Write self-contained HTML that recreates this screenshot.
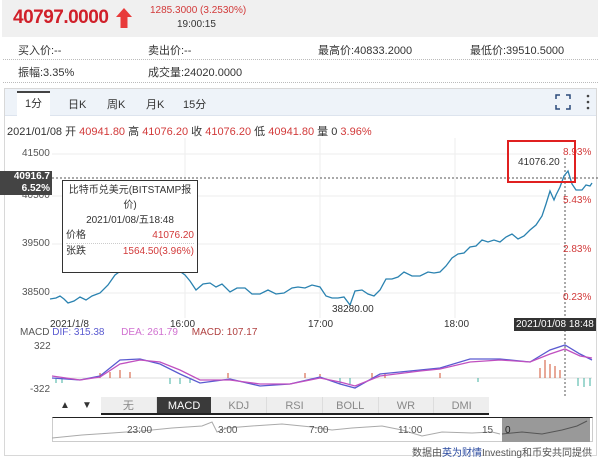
<!DOCTYPE html>
<html><head><meta charset="utf-8"><style>
*{margin:0;padding:0;box-sizing:border-box}
body{width:600px;height:460px;background:#fff;font-family:"Liberation Sans","Noto Sans CJK SC",sans-serif;font-size:11px;color:#333;position:relative;overflow:hidden}
.a{position:absolute;white-space:nowrap}
.r{color:#d23a3a}
</style></head><body>
<div class="a" style="left:2px;top:0;width:596px;height:37px;background:#f0f0f0"></div>
<div class="a" style="left:13px;top:7px;font-size:19px;letter-spacing:-0.5px;font-weight:bold;color:#d0202a">40797.0000</div>
<svg class="a" style="left:115px;top:7px" width="18" height="22"><path d="M9 1 L17 10 L12.5 10 L12.5 21 L5.5 21 L5.5 10 L1 10 Z" fill="#e83a3a"/></svg>
<div class="a r" style="left:150px;top:5px;font-size:10px">1285.3000 (3.2530%)</div>
<div class="a" style="left:177px;top:19px;font-size:10px">19:00:15</div>
<div class="a" style="left:18px;top:42px">买入价:--</div>
<div class="a" style="left:148px;top:42px">卖出价:--</div>
<div class="a" style="left:318px;top:42px">最高价:40833.2000</div>
<div class="a" style="left:470px;top:42px">最低价:39510.5000</div>
<div class="a" style="left:3px;top:59px;width:595px;border-top:1px dotted #bbb"></div>
<div class="a" style="left:18px;top:64px">振幅:3.35%</div>
<div class="a" style="left:148px;top:64px">成交量:24020.0000</div>
<div class="a" style="left:3px;top:82px;width:595px;border-top:1px dotted #bbb"></div>
<div class="a" style="left:4px;top:88px;width:593px;height:368px;border:1px solid #d8d8d8"></div>
<div class="a" style="left:5px;top:89px;width:591px;height:27px;background:#eef3f9;border-bottom:1px solid #dde4ee"></div>
<div class="a" style="left:17px;top:91px;width:33px;height:25px;background:#fff;border-top:2px solid #444;text-align:center;line-height:23px">1分</div>
<div class="a" style="left:68px;top:96px">日K</div>
<div class="a" style="left:107px;top:96px">周K</div>
<div class="a" style="left:146px;top:96px">月K</div>
<div class="a" style="left:183px;top:96px">15分</div>
<svg class="a" style="left:555px;top:94px" width="40" height="16"><path d="M1 5V1h4M11 1h4v4M15 11v4h-4M5 15H1v-4" stroke="#2a4a7a" stroke-width="1.5" fill="none"/><circle cx="33" cy="2" r="1.3" fill="#444"/><circle cx="33" cy="8" r="1.3" fill="#444"/><circle cx="33" cy="14" r="1.3" fill="#444"/></svg>
<div class="a" style="left:7px;top:123px">2021/01/08 开 <span class="r">40941.80</span> 高 <span class="r">41076.20</span> 收 <span class="r">41076.20</span> 低 <span class="r">40941.80</span> 量 0 <span class="r">3.96%</span></div>
<svg class="a" style="left:0;top:138px" width="600" height="260">
<g stroke="#eee"><line x1="185" y1="0" x2="185" y2="180"/><line x1="320" y1="0" x2="320" y2="180"/><line x1="455" y1="0" x2="455" y2="180"/><line x1="52" y1="16" x2="560" y2="16"/><line x1="52" y1="58" x2="560" y2="58"/><line x1="52" y1="106" x2="560" y2="106"/><line x1="52" y1="155" x2="560" y2="155"/></g>
<line x1="52" y1="40" x2="598" y2="40" stroke="#555" stroke-dasharray="2,2"/>
<line x1="565" y1="20" x2="565" y2="260" stroke="#555" stroke-dasharray="2,2"/>
<polyline fill="none" stroke="#2a82b0" stroke-width="1.3" points="50,161 56,160 60,158 64,161 68,165 74,163 80,159 86,162 92,158 100,155 108,147 115,137 122,132 128,133 134,132 142,133 150,132 157,125 164,128 170,131 178,132 185,137 190,143 196,152 203,146 210,145 216,149 222,146 230,154 237,150 245,150 252,156 260,156 268,152 276,156 284,155 292,150 298,149 305,150 312,147 320,149 326,158 332,160 338,160 344,159 350,167 355,153 362,152 368,156 374,158 380,152 386,141 392,141 398,139 404,134 412,138 420,138 428,134 434,135 440,134 446,128 452,120 458,116 464,115 470,109 476,108 482,102 488,104 494,102 500,104 506,99 512,96 518,101 524,98 530,92 536,87 542,78 546,66 550,53 554,62 556,57 560,49 564,38 568,33 572,46 576,52 582,52 586,47 590,48 592,45"/>
</svg>
<div class="a" style="left:22px;top:148px;font-size:10px;color:#555">41500</div>
<div class="a" style="left:22px;top:190px;font-size:10px;color:#555">40500</div>
<div class="a" style="left:22px;top:238px;font-size:10px;color:#555">39500</div>
<div class="a" style="left:22px;top:287px;font-size:10px;color:#555">38500</div>
<div class="a r" style="left:563px;top:147px;font-size:10px">8.93%</div>
<div class="a r" style="left:563px;top:195px;font-size:10px">5.43%</div>
<div class="a r" style="left:563px;top:244px;font-size:10px">2.83%</div>
<div class="a r" style="left:563px;top:292px;font-size:10px">0.23%</div>
<div class="a" style="left:0;top:171px;width:52px;height:24px;background:#444;color:#fff;font-size:10px;font-weight:bold;text-align:right;line-height:12px;padding-right:2px">40916.7<br>6.52%</div>
<div class="a" style="left:62px;top:180px;width:136px;height:93px;background:#fff;border:1px solid #333;font-size:10px;line-height:15px;padding:2px 3px">
<div style="text-align:center">比特币兑美元(BITSTAMP报</div><div style="text-align:center">价)</div><div style="text-align:center">2021/01/08/五18:48</div>
<div style="border-bottom:1px dotted #ccc">价格<span class="r" style="float:right">41076.20</span></div>
<div>张跌<span class="r" style="float:right">1564.50(3.96%)</span></div></div>
<div class="a" style="left:507px;top:140px;width:69px;height:43px;border:2px solid #e02020"></div>
<div class="a" style="left:518px;top:157px;font-size:10px;background:#fff">41076.20</div>
<div class="a" style="left:332px;top:304px;font-size:10px">38280.00</div>
<div class="a" style="left:50px;top:319px;font-size:10px">2021/1/8</div>
<div class="a" style="left:170px;top:319px;font-size:10px">16:00</div>
<div class="a" style="left:308px;top:319px;font-size:10px">17:00</div>
<div class="a" style="left:444px;top:319px;font-size:10px">18:00</div>
<div class="a" style="left:514px;top:318px;background:#333;color:#fff;font-size:10px;padding:1px 2px">2021/01/08 18:48</div>
<div class="a" style="left:20px;top:327px;font-size:10px;color:#555">MACD <span style="color:#5a5ad0">DIF: 315.38</span> &nbsp;&nbsp;&nbsp;&nbsp; <span style="color:#d070d0">DEA: 261.79</span> &nbsp;&nbsp;&nbsp; <span style="color:#b04040">MACD: 107.17</span></div>
<div class="a" style="left:34px;top:341px;font-size:10px;color:#555">322</div>
<div class="a" style="left:30px;top:384px;font-size:10px;color:#555">-322</div>
<svg class="a" style="left:0;top:340px" width="600" height="55">
<line x1="52" y1="38" x2="592" y2="38" stroke="#ddd"/>
<g stroke="#d05030"><line x1="100" y1="38" x2="100" y2="33"/><line x1="110" y1="38" x2="110" y2="32"/><line x1="120" y1="38" x2="120" y2="30"/><line x1="130" y1="38" x2="130" y2="32"/><line x1="228" y1="38" x2="228" y2="33"/><line x1="305" y1="38" x2="305" y2="33"/><line x1="320" y1="38" x2="320" y2="34"/><line x1="372" y1="38" x2="372" y2="33"/><line x1="385" y1="38" x2="385" y2="34"/><line x1="440" y1="38" x2="440" y2="33"/><line x1="540" y1="38" x2="540" y2="28"/><line x1="545" y1="38" x2="545" y2="20"/><line x1="550" y1="38" x2="550" y2="24"/><line x1="555" y1="38" x2="555" y2="26"/><line x1="560" y1="38" x2="560" y2="30"/></g>
<g stroke="#40b0a0"><line x1="56" y1="38" x2="56" y2="43"/><line x1="62" y1="38" x2="62" y2="43"/><line x1="170" y1="38" x2="170" y2="44"/><line x1="180" y1="38" x2="180" y2="44"/><line x1="190" y1="38" x2="190" y2="43"/><line x1="340" y1="38" x2="340" y2="44"/><line x1="350" y1="38" x2="350" y2="44"/><line x1="478" y1="38" x2="478" y2="42"/><line x1="578" y1="38" x2="578" y2="46"/><line x1="584" y1="38" x2="584" y2="47"/><line x1="590" y1="38" x2="590" y2="46"/></g>
<polyline fill="none" stroke="#5a5ad0" stroke-width="1.3" points="52,38 80,40 100,36 120,20 140,19 160,24 180,34 200,43 230,39 260,46 290,44 320,37 340,44 355,48 380,34 420,30 440,28 470,19 500,19 530,22 550,10 565,5 580,14 592,20"/>
<polyline fill="none" stroke="#c050c0" stroke-width="1.3" points="52,36 80,40 100,37 120,24 140,20 160,22 180,30 200,40 230,40 260,44 290,44 320,38 340,42 355,46 380,36 420,31 440,29 470,22 500,20 530,22 550,14 565,9 580,16 592,18"/>
</svg>
<div class="a" style="left:60px;top:400px;font-size:10px">▲</div>
<div class="a" style="left:82px;top:400px;font-size:10px">▼</div>
<div class="a" style="left:101px;top:397px;width:388px;height:18px;display:flex;font-size:11px;color:#888;border-bottom:2px solid #222">
<div style="flex:1;background:#eee;border-right:1px solid #ddd;text-align:center;line-height:18px">无</div>
<div style="flex:1;background:#3a3a3a;color:#fff;text-align:center;line-height:18px">MACD</div>
<div style="flex:1;background:#eee;border-right:1px solid #ddd;text-align:center;line-height:18px">KDJ</div>
<div style="flex:1;background:#eee;border-right:1px solid #ddd;text-align:center;line-height:18px">RSI</div>
<div style="flex:1;background:#eee;border-right:1px solid #ddd;text-align:center;line-height:18px">BOLL</div>
<div style="flex:1;background:#eee;border-right:1px solid #ddd;text-align:center;line-height:18px">WR</div>
<div style="flex:1;background:#eee;text-align:center;line-height:18px">DMI</div></div>
<div class="a" style="left:52px;top:417px;width:541px;height:25px;border:1px solid #ccc;border-top:1px solid #222"></div>
<svg class="a" style="left:52px;top:418px" width="541" height="24">
<rect x="450" y="0" width="88" height="24" fill="#999"/>
<polyline fill="none" stroke="#aaa" points="0,20 30,17 60,15 90,13 120,10 150,8 160,4 165,14 175,10 200,8 230,6 260,9 280,12 300,10 330,8 350,12 370,18 390,14 420,15 440,14 448,16"/>
<polyline fill="none" stroke="#555" points="450,16 470,14 490,16 510,12 525,8 535,3"/>
</svg>
<div class="a" style="left:127px;top:425px;font-size:10px;color:#555">23:00</div>
<div class="a" style="left:218px;top:425px;font-size:10px;color:#555">3:00</div>
<div class="a" style="left:309px;top:425px;font-size:10px;color:#555">7:00</div>
<div class="a" style="left:398px;top:425px;font-size:10px;color:#555">11:00</div>
<div class="a" style="left:482px;top:425px;font-size:10px;color:#555">15</div>
<div class="a" style="left:505px;top:425px;font-size:10px;color:#222">0</div>
<div class="a" style="right:8px;top:444px;font-size:10px;color:#555">数据由<span style="color:#2a4aa0">英为财情</span>Investing和币安共同提供</div>
</body></html>
